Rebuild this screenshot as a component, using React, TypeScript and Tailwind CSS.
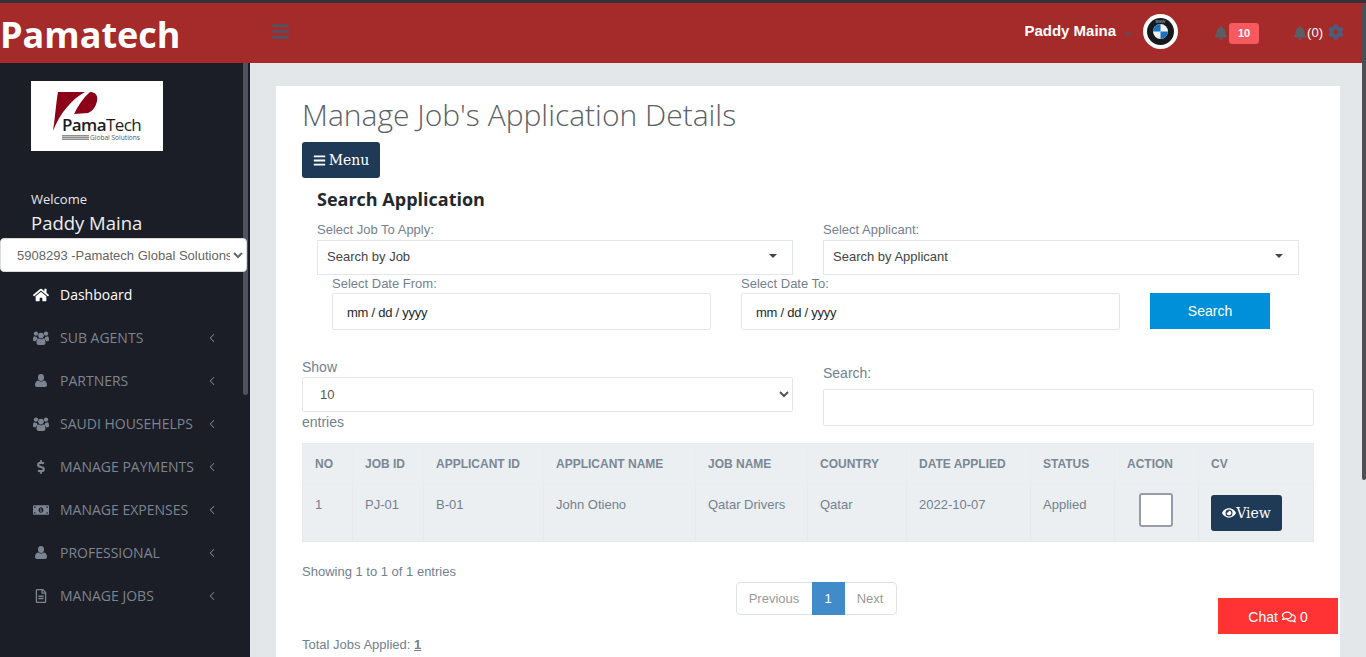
import React from "react";
import { ChevronLeft } from "lucide-react";
import {
  FaBars,
  FaBell,
  FaChevronDown,
  FaCog,
  FaDollarSign,
  FaEye,
  FaHome,
  FaMoneyBillAlt,
  FaRegComments,
  FaRegFileAlt,
} from "react-icons/fa";

function UserIcon() {
  return (
    <svg width="12" height="13" viewBox="0 0 12 13" fill="currentColor">
      <ellipse cx="6" cy="3.5" rx="3" ry="3.4" />
      <path d="M0 11 C0 8 1.5 6.5 3.5 6.5 C4.2 7.3 5 7.6 6 7.6 C7 7.6 7.8 7.3 8.5 6.5 C10.5 6.5 12 8 12 11 C12 12.3 11.2 13 10 13 L2 13 C0.8 13 0 12.3 0 11 Z" />
    </svg>
  );
}

function UsersIcon() {
  return (
    <svg width="16" height="14" viewBox="0 0 16 14" fill="currentColor">
      <circle cx="8" cy="4.6" r="2.8" />
      <path d="M3.5 11.5 C3.5 9 4.6 7.6 6 7.6 C6.6 8.1 7.3 8.4 8 8.4 C8.7 8.4 9.4 8.1 10 7.6 C11.4 7.6 12.5 9 12.5 11.5 C12.5 13 11.7 14 10.5 14 L5.5 14 C4.3 14 3.5 13 3.5 11.5 Z" />
      <circle cx="3" cy="2.6" r="2.2" />
      <circle cx="13" cy="2.6" r="2.2" />
      <path d="M0 8.6 C0 6.6 0.5 5.3 1.5 5.2 C2.2 5.8 3 6 3.8 6 C4 7 4.4 7.5 4.9 7.9 C3.8 8.4 3 9.2 2.7 10.3 L1 10.3 C0.4 10.3 0 9.6 0 8.6 Z" />
      <path d="M16 8.6 C16 6.6 15.5 5.3 14.5 5.2 C13.8 5.8 13 6 12.2 6 C12 7 11.6 7.5 11.1 7.9 C12.2 8.4 13 9.2 13.3 10.3 L15 10.3 C15.6 10.3 16 9.6 16 8.6 Z" />
    </svg>
  );
}

const menuItems = [
  { label: "SUB AGENTS", icon: <UsersIcon /> },
  { label: "PARTNERS", icon: <UserIcon /> },
  { label: "SAUDI HOUSEHELPS", icon: <UsersIcon /> },
  { label: "MANAGE PAYMENTS", icon: <FaDollarSign size={14} /> },
  { label: "MANAGE EXPENSES", icon: <FaMoneyBillAlt size={16} /> },
  { label: "PROFESSIONAL", icon: <UserIcon /> },
  { label: "MANAGE JOBS", icon: <FaRegFileAlt size={14} /> },
];

const columns = [
  { text: "NO", width: "w-[50px]" },
  { text: "JOB ID", width: "w-[71px]" },
  { text: "APPLICANT ID", width: "w-[120px]" },
  { text: "APPLICANT NAME", width: "w-[152px]" },
  { text: "JOB NAME", width: "w-[112px]" },
  { text: "COUNTRY", width: "w-[99px]" },
  { text: "DATE APPLIED", width: "w-[124px]" },
  { text: "STATUS", width: "w-[84px]" },
  { text: "ACTION", width: "w-[84px]" },
  { text: "CV", width: "w-[115px]" },
];

const rowCells = ["1", "PJ-01", "B-01", "John Otieno", "Qatar Drivers", "Qatar", "2022-10-07", "Applied"];

function PamaLogo() {
  return (
    <div className="w-[132px] h-[70px] bg-white relative overflow-hidden">
      <svg className="absolute left-[21px] top-[10px]" width="46" height="42" viewBox="0 0 46 42">
        <path d="M6 1 L33 1 C20 8 8 22 1 40 C3 28 4 12 6 1 Z" fill="#8c0018" />
        <path d="M38 1 C44 1 46 5 45 10 C44 15 41 20 36 22 L22 23 C26 15 31 7 38 1 Z" fill="#8c0018" />
      </svg>
      <span className="absolute left-[31px] top-[36px] text-[17px] leading-[16px] text-[#1d1d1f] font-['Open_Sans',sans-serif] font-semibold tracking-[-0.6px]">
        Pama<span className="font-normal">Tech</span>
      </span>
      <div className="absolute left-[31px] top-[54px] w-[27px] h-[5px] bg-[repeating-linear-gradient(to_bottom,#8d8d8d_0,#8d8d8d_1px,#c4c4c4_1px,#c4c4c4_2px)]" />
      <span className="absolute left-[59px] top-[54px] text-[6.6px] leading-[6px] text-[#555] font-['Open_Sans',sans-serif]">
        Global Solutions
      </span>
    </div>
  );
}

function BmwLogo() {
  return (
    <svg width="35" height="35" viewBox="0 0 35 35">
      <circle cx="17.5" cy="17.5" r="17.5" fill="#fff" />
      <circle cx="17.5" cy="17.5" r="13.5" fill="#18191b" />
      <circle cx="17.5" cy="17.5" r="7.5" fill="#f1f4f7" />
      <path d="M17.5 10 A7.5 7.5 0 0 0 10 17.5 L17.5 17.5 Z" fill="#1673c4" />
      <path d="M17.5 25 A7.5 7.5 0 0 0 25 17.5 L17.5 17.5 Z" fill="#1673c4" />
      <text x="17.5" y="8.6" textAnchor="middle" fontSize="4" fill="#b5b8bc" fontFamily="Liberation Sans, sans-serif">
        BMW
      </text>
    </svg>
  );
}

function Header() {
  return (
    <header className="h-[60px] bg-[#a52a2a] flex items-center shrink-0">
      <div className="w-[250px] pt-[4px] text-[36px] leading-[56px] font-bold text-white font-['Open_Sans',sans-serif]">
        Pamatech
      </div>
      <FaBars size={19} className="ml-[21px] text-[#4b5563] -mt-[3px]" />
      <div className="ml-auto flex items-center text-white font-['Liberation_Sans',sans-serif]">
        <span className="text-[15px] font-bold -mt-[4px]">Paddy Maina</span>
        <FaChevronDown size={9} className="ml-[8px] text-[#4b5563]" />
        <div className="ml-[10px] -mt-[4px]">
          <BmwLogo />
        </div>
        <FaBell size={14} className="ml-[36px] text-[#5a5f66]" />
        <span className="ml-[1px] w-[30px] h-[21px] bg-[#f8595f] rounded-[3px] text-[11px] font-bold flex items-center justify-center">
          10
        </span>
        <FaBell size={14} className="ml-[34px] text-[#5a5f66]" />
        <span className="text-[13px]">(0)</span>
        <FaCog size={16} className="ml-[5px] mr-[22px] -mt-[3px] text-[#4b5f7c]" />
      </div>
    </header>
  );
}

function Sidebar() {
  return (
    <aside className="w-[250px] shrink-0 bg-[#1b1e26] relative font-['Open_Sans',sans-serif]">
      <div className="pl-[31px] pt-[18px]">
        <PamaLogo />
        <div className="mt-[39px] text-[13px] leading-[18px] text-[#e4e7ea]">Welcome</div>
        <div className="mt-[1px] text-[18.5px] leading-[28px] text-[#eceef0]">Paddy Maina</div>
      </div>
      <select className="relative z-10 block w-[247px] h-[34px] mt-[1px] pl-[12px] bg-white rounded-[4px] border border-[#d8dbe0] text-[13px] text-[#666] font-['Liberation_Sans',sans-serif]">
        <option>5908293 -Pamatech Global Solutions</option>
      </select>
      <nav className="mt-[1px]">
        <div className="h-[43px] flex items-center text-white text-[14px]">
          <span className="w-[30px] ml-[26px] mr-[4px] flex justify-center">
            <FaHome size={16} />
          </span>
          Dashboard
        </div>
        {menuItems.map((item) => (
          <div key={item.label} className="h-[43px] flex items-center text-[#7d8491] text-[14px]">
            <span className="w-[30px] ml-[26px] mr-[4px] flex justify-center">{item.icon}</span>
            <span className="flex-1 whitespace-nowrap">{item.label}</span>
            <ChevronLeft size={14} strokeWidth={1.75} className="mr-[31px]" />
          </div>
        ))}
      </nav>
      <div className="absolute left-[243px] top-0 w-[5px] h-[332px] rounded-b-[3px] bg-[#4d545c]" />
    </aside>
  );
}

function Label({ children }: { children: React.ReactNode }) {
  return <div className="text-[13px] leading-[16px] text-[#73818f]">{children}</div>;
}

function ComboBox({ text }: { text: string }) {
  return (
    <div className="h-[35px] mt-[2px] border border-[#e4e7ea] pl-[9px] pr-[15px] pb-[1px] flex items-center justify-between text-[13px] text-[#444]">
      {text}
      <span className="w-0 h-0 border-x-[4px] border-x-transparent border-t-[4px] border-t-[#444] -mt-[2px]" />
    </div>
  );
}

function DateField() {
  return (
    <input
      readOnly
      value="mm / dd / yyyy"
      className="block w-full h-[37px] mt-[1px] px-[14px] pt-[1px] border border-[#e4e7ea] rounded-[2px] text-[13px] tracking-[-0.25px] text-[#23282c] outline-none"
    />
  );
}

function JobTable() {
  return (
    <table className="w-full table-fixed border-collapse mt-[11px] bg-[#ebeff2] text-[13px] text-[#73818f]">
      <colgroup>
        {columns.map((col) => (
          <col key={col.text} className={col.width} />
        ))}
      </colgroup>
      <thead>
        <tr className="h-[41px]">
          {columns.map((col) => (
            <th key={col.text} className="pl-[12px] text-left text-[12px] font-bold text-[#7b8794] whitespace-nowrap border border-[#e9edf0]">
              {col.text}
            </th>
          ))}
        </tr>
      </thead>
      <tbody>
        <tr className="h-[57px]">
          {rowCells.map((cell, index) => (
            <td key={index} className="pl-[12px] pb-[17px] border border-[#e6eaed] whitespace-nowrap">
              {cell}
            </td>
          ))}
          <td className="pl-[24px] border border-[#e6eaed]">
            <div className="w-[34px] h-[34px] bg-white border-[2px] border-[#9a9aa8] rounded-[3px] -mt-[6px]" />
          </td>
          <td className="pl-[12px] border border-[#e6eaed]">
            <button className="w-[71px] h-[36px] bg-[#1f3a57] rounded-[3px] text-white text-[14px] font-['DejaVu_Serif',serif] flex items-center justify-center">
              <FaEye size={14} />
              View
            </button>
          </td>
        </tr>
      </tbody>
    </table>
  );
}

function Content() {
  return (
    <main className="flex-1 min-w-0 bg-[#e4e7ea] pl-[26px] pr-[26px] pt-[23px] relative font-['Liberation_Sans',sans-serif]">
      <div className="bg-white h-[600px] pl-[26px] pr-[26px]">
        <h1 className="pt-[8px] text-[30px] leading-[42px] font-light text-[#5c6166] font-['Open_Sans',sans-serif]">
          Manage Job's Application Details
        </h1>
        <button className="mt-[6px] w-[78px] h-[36px] bg-[#1f3a57] rounded-[3px] text-white text-[14px] font-['DejaVu_Serif',serif] flex items-center justify-center gap-[3px]">
          <FaBars size={13} />
          Menu
        </button>
        <h2 className="ml-[15px] mt-[8px] text-[18px] leading-[26px] font-bold text-[#23282c] font-['Open_Sans',sans-serif]">
          Search Application
        </h2>
        <div className="ml-[15px] mr-[15px] mt-[10px] flex gap-[30px]">
          <div className="w-[476px]">
            <Label>Select Job To Apply:</Label>
            <ComboBox text="Search by Job" />
          </div>
          <div className="w-[476px]">
            <Label>Select Applicant:</Label>
            <ComboBox text="Search by Applicant" />
          </div>
        </div>
        <div className="ml-[30px] mt-[1px] flex items-end">
          <div className="w-[379px]">
            <Label>Select Date From:</Label>
            <DateField />
          </div>
          <div className="w-[379px] ml-[30px]">
            <Label>Select Date To:</Label>
            <DateField />
          </div>
          <button className="ml-[30px] w-[120px] h-[36px] mb-[1px] bg-[#0090d9] text-white text-[14px]">Search</button>
        </div>
        <div className="mt-[27px] flex gap-[30px] text-[14px] text-[#73818f]">
          <div className="w-[491px]">
            <div className="leading-[20px]">Show</div>
            <select className="block w-full h-[35px] pl-[13px] pr-[6px] border border-[#e4e7ea] rounded-[2px] bg-white text-[13px] text-[#555]">
              <option>10</option>
            </select>
            <div className="leading-[20px]">entries</div>
          </div>
          <div className="flex-1">
            <div className="mt-[6px] leading-[20px]">Search:</div>
            <input className="block w-full h-[37px] mt-[6px] border border-[#e4e7ea] rounded-[2px]" />
          </div>
        </div>
        <JobTable />
        <div className="mt-[22px] text-[13px] leading-[16px] text-[#73818f]">Showing 1 to 1 of 1 entries</div>
        <div className="mt-[2px] flex justify-center text-[13px]">
          <div className="ml-[16px] flex h-[33px] border border-[#dfe3e6] rounded-[4px] text-[#9a9a9a] items-stretch">
            <span className="w-[75px] flex items-center justify-center">Previous</span>
            <span className="w-[33px] -my-px flex items-center justify-center bg-[#428bca] text-white">1</span>
            <span className="w-[51px] flex items-center justify-center">Next</span>
          </div>
        </div>
        <div className="mt-[22px] text-[13px] leading-[16px] text-[#73818f]">
          Total Jobs Applied: <span className="font-bold underline">1</span>
        </div>
      </div>
      <button className="absolute right-[28px] bottom-[23px] w-[120px] h-[36px] pt-[2px] bg-[#ff3333] text-white text-[14px] flex items-center justify-center gap-[4px]">
        Chat <FaRegComments size={14} /> 0
      </button>
    </main>
  );
}

export default function App() {
  return (
    <div className="w-[1366px] h-[657px] overflow-hidden flex flex-col relative">
      <div className="h-[3px] bg-[#2f3237] shrink-0" />
      <Header />
      <div className="flex flex-1 min-h-0">
        <Sidebar />
        <Content />
      </div>
      <div className="absolute right-0 top-[5px] w-[4px] h-[475px] rounded-b-[2px] bg-[#4d4f55]" />
    </div>
  );
}
